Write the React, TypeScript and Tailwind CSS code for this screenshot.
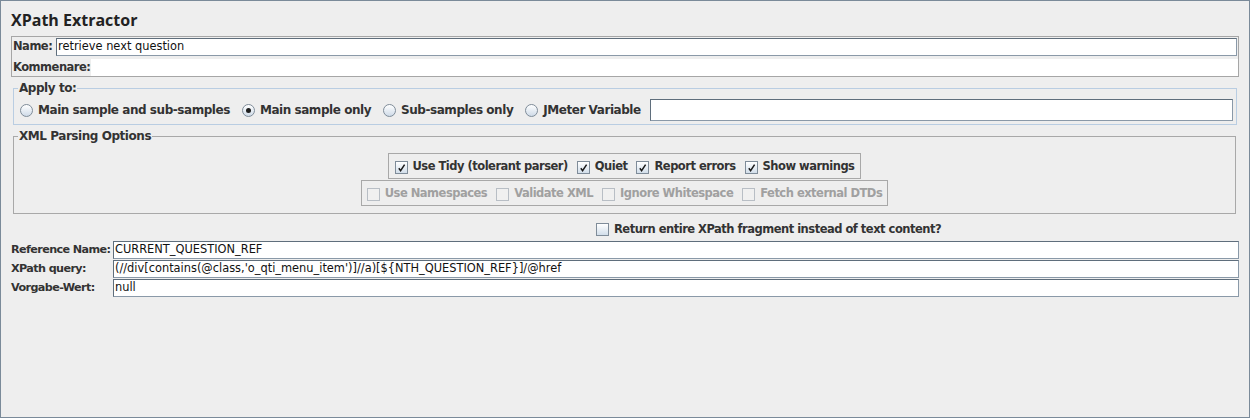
import React from "react";

const font = { fontFamily: '"DejaVu Sans", "Liberation Sans", sans-serif' };

const label = "font-bold text-[11.5px] tracking-[-0.5px] text-[#333] whitespace-nowrap";
const rowLabel = "font-bold text-[11.2px] tracking-[-0.6px] text-[#333] whitespace-nowrap";
const radioLabel = "font-bold text-[12px] tracking-[-0.45px] text-[#333] whitespace-nowrap";

function Radio({ checked, text }: { checked?: boolean; text: string }) {
    return (
        <div className="flex items-center gap-[5px]">
            <span className="w-[13px] h-[13px] rounded-full border border-[#7f8c99] bg-gradient-to-b from-[#ffffff] to-[#cfdbe8] flex items-center justify-center">
                {checked ? <span className="w-[5px] h-[5px] rounded-full bg-[#1e1e1e]" /> : null}
            </span>
            <span className={radioLabel}>{text}</span>
        </div>
    );
}

function Check({ checked, text, disabled }: { checked?: boolean; text: string; disabled?: boolean }) {
    return (
        <div className="flex items-center gap-[5px]">
            <span
                className={
                    disabled
                        ? "w-[13px] h-[13px] border border-[#b8bec5] bg-[#f0f0f0] flex items-center justify-center"
                        : "w-[13px] h-[13px] border border-[#7f8c99] bg-gradient-to-b from-[#ffffff] to-[#d2deea] flex items-center justify-center"
                }
            >
                {checked ? (
                    <svg width="9" height="9" viewBox="0 0 9 9">
                        <path d="M1.8 5.2 L3.6 7.6 L7.6 1.6" stroke="#1a1a1a" strokeWidth="1.5" fill="none" />
                    </svg>
                ) : null}
            </span>
            <span
                className={
                    disabled
                        ? "font-bold text-[11.5px] tracking-[-0.5px] text-[#a0a0a0] whitespace-nowrap"
                        : label
                }
            >
                {text}
            </span>
        </div>
    );
}

function Field({ value, className }: { value?: string; className: string }) {
    return (
        <div
            className={
                "bg-white border border-[#8a99a8] border-t-[#5f6e7c] border-l-[#5f6e7c] h-[18px] flex items-center px-[1px] text-[11.4px] text-[#111] whitespace-nowrap " +
                className
            }
        >
            {value}
        </div>
    );
}

function Legend({ text }: { text: string }) {
    return (
        <span className="absolute left-[5px] top-0 px-[1px] bg-[#eeeeee] font-bold text-[12px] tracking-[-0.45px] text-[#333] leading-[14px]">
            {text}
        </span>
    );
}

export default function App() {
    return (
        <div className="w-[1252px] h-[418px] bg-white" style={font}>
            <div className="w-[1250px] h-[418px] bg-[#eeeeee] border border-[#7a8a99] flex flex-col">
                <div
                    className="pl-[10px] pt-[7px] h-[35px] text-[16px] font-bold text-[#222]"
                    style={{ fontFamily: '"Open Sans", "DejaVu Sans", sans-serif' }}
                >
                    XPath Extractor
                </div>

                <div className="ml-[10px] w-[1228px] border border-[#a6a6a6] flex flex-col">
                    <div className="flex items-center pt-[1px] pb-[3px]">
                        <span className={"pl-[1px] w-[44px] " + label}>Name:</span>
                        <Field value="retrieve next question" className="w-[1181px]" />
                    </div>
                    <div className="flex items-center h-[17px]">
                        <span className={"pl-[1px] w-[79px] " + label}>Kommenare:</span>
                        <div className="flex-1 h-full bg-white" />
                    </div>
                </div>

                <div className="ml-[12px] mt-[4px] w-[1224px] relative">
                    <div className="h-[7px]" />
                    <div className="border border-[#b9cde2] h-[37px] flex items-center pl-[6px] pr-[3px] pt-[7px] gap-[12px]">
                        <Radio text="Main sample and sub-samples" />
                        <Radio text="Main sample only" checked />
                        <Radio text="Sub-samples only" />
                        <Radio text="JMeter Variable" />
                        <Field className="flex-1 h-[22px] ml-[-3px]" />
                    </div>
                    <Legend text="Apply to:" />
                </div>

                <div className="ml-[12px] mt-[4px] w-[1223px] relative">
                    <div className="h-[7px]" />
                    <div className="border border-[#a8a8a8] h-[78px] flex flex-col items-center pt-[16px] gap-[1px]">
                        <div className="border border-[#a8a8a8] h-[26px] px-[6px] pt-[2px] flex items-center gap-[9px]">
                            <Check checked text="Use Tidy (tolerant parser)" />
                            <Check checked text="Quiet" />
                            <Check checked text="Report errors" />
                            <Check checked text="Show warnings" />
                        </div>
                        <div className="border border-[#a8a8a8] h-[26px] px-[5px] pt-[2px] flex items-center gap-[9px]">
                            <Check disabled text="Use Namespaces" />
                            <Check disabled text="Validate XML" />
                            <Check disabled text="Ignore Whitespace" />
                            <Check disabled text="Fetch external DTDs" />
                        </div>
                    </div>
                    <Legend text="XML Parsing Options" />
                </div>

                <div className="pl-[595px] mt-[8px] h-[15px] flex items-center">
                    <Check text="Return entire XPath fragment instead of text content?" />
                </div>

                <div className="mt-[4px] flex flex-col gap-[1px] pl-[10px]">
                    <div className="flex items-center">
                        <span className={"w-[102px] " + rowLabel}>Reference Name:</span>
                        <Field value="CURRENT_QUESTION_REF" className="w-[1126px]" />
                    </div>
                    <div className="flex items-center">
                        <span className={"w-[102px] " + rowLabel}>XPath query:</span>
                        <Field
                            value="(//div[contains(@class,'o_qti_menu_item')]//a)[${NTH_QUESTION_REF}]/@href"
                            className="w-[1126px]"
                        />
                    </div>
                    <div className="flex items-center">
                        <span className={"w-[102px] " + rowLabel}>Vorgabe-Wert:</span>
                        <Field value="null" className="w-[1126px]" />
                    </div>
                </div>
            </div>
        </div>
    );
}
